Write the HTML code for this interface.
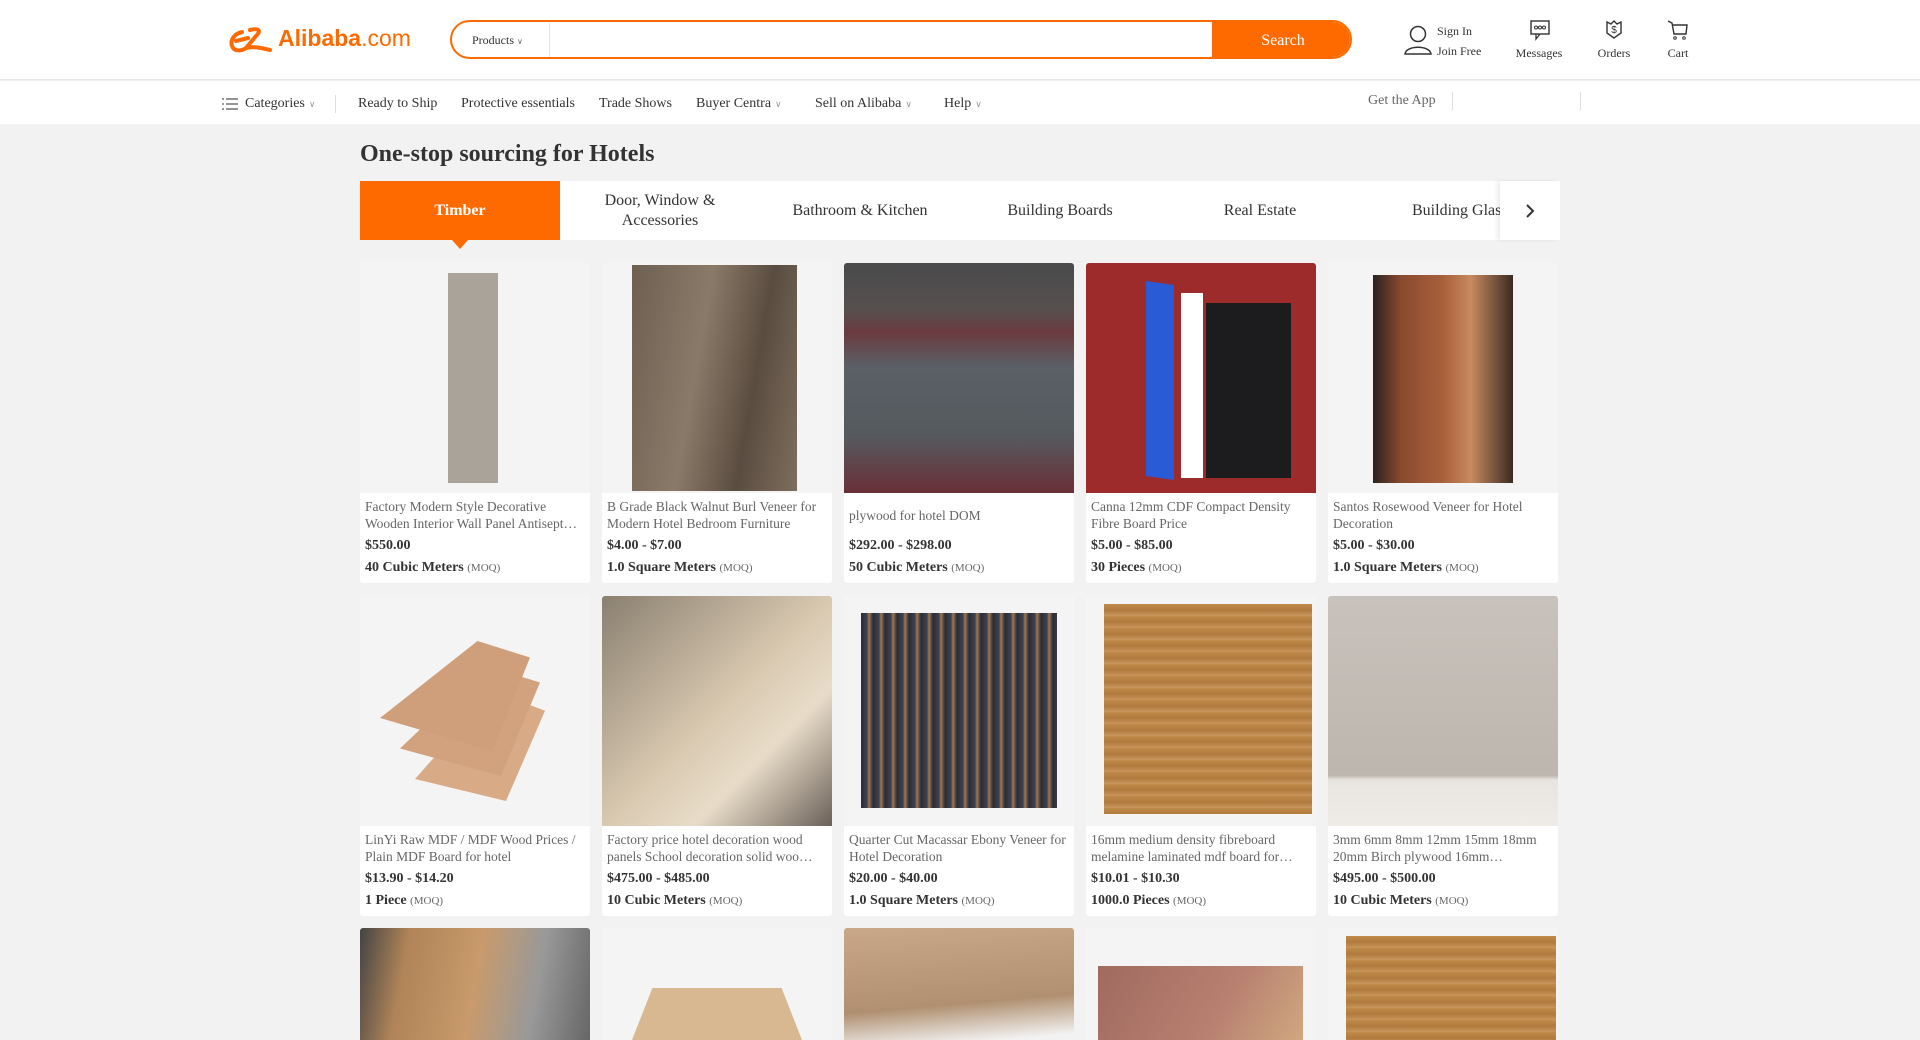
<!DOCTYPE html>
<html><head><meta charset="utf-8"><style>
*{margin:0;padding:0;box-sizing:border-box}
html,body{width:1920px;height:1040px;overflow:hidden}
body{background:#f2f2f2;font-family:"Liberation Serif",serif;color:#333}
#wrap{position:relative;width:1920px;height:1040px;overflow:hidden;background:#f2f2f2}
.a{position:absolute}
#hdr{left:0;top:0;width:1920px;height:80px;background:#fff;border-bottom:1px solid #e5e5e5}
#nav{left:0;top:81px;width:1920px;height:43px;background:#fff}
.nv{position:absolute;top:96px;font-size:14px;color:#333;white-space:nowrap}
.car{font-size:9px;color:#999;margin-left:4px}
.ic{font-size:12px;color:#333;text-align:center;white-space:nowrap}
.tab{position:absolute;top:181px;height:59px;display:flex;align-items:center;justify-content:center;text-align:center;font-size:16px;color:#333;line-height:20px}
.card{position:absolute;width:230px;height:320px;background:#fff;border-radius:3px;overflow:hidden}
.r3{height:112px;border-radius:3px 3px 0 0;background:#f4f4f4}
.img{position:absolute;left:0;top:0;width:230px;height:230px;background:#f4f4f4}
.t{position:absolute;left:5px;top:235px;width:222px;font-size:13.5px;line-height:17px;color:#666;height:34px;overflow:hidden}
.p{position:absolute;left:5px;top:275px;font-size:14px;font-weight:bold;color:#333}
.m{position:absolute;left:5px;top:297px;font-size:14px;font-weight:bold;color:#333}
.m span{font-weight:normal;font-size:11px;color:#666}
</style></head><body><div id="wrap">
<div id="hdr" class="a"></div>
<svg class="a" style="left:228px;top:26px" width="46" height="30" viewBox="0 0 46 30"><path d="M14 6 C6 8 2 14 4 20 C6 26 14 25 18 22 M8 15 L20 12 M22 4 C30 2 34 4 28 10 L18 22 C26 20 34 22 42 24" fill="none" stroke="#ff6a00" stroke-width="4" stroke-linecap="round"/></svg>
<div class="a" style="left:278px;top:25px;font-family:'Liberation Sans',sans-serif;font-size:23px;color:#ff6a00;white-space:nowrap"><b>Alibaba</b>.com</div>
<div class="a" style="left:450px;top:20px;width:902px;height:39px;border:2px solid #ff6a00;border-radius:20px;background:#fff;overflow:hidden">
<div class="a" style="left:0;top:1px;width:98px;height:35px;border-right:1px solid #e5e5e5;font-size:12px;line-height:35px;padding-left:20px;color:#333">Products <span style="font-size:8px;color:#666">&#8744;</span></div>
<div class="a" style="left:760px;top:0;width:142px;height:35px;background:#ff6a00;color:#fff;font-size:16px;line-height:37px;text-align:center">Search</div>
</div>
<svg class="a" style="left:1403px;top:24px" width="30" height="32" viewBox="0 0 30 32"><circle cx="15" cy="10" r="7.5" fill="none" stroke="#333" stroke-width="1.5"/><path d="M2 30 C3 21 27 21 28 30 Z" fill="none" stroke="#333" stroke-width="1.5"/></svg>
<div class="a" style="left:1437px;top:21px;font-size:12px;line-height:20px">Sign In<br>Join Free</div>
<svg class="a" style="left:1529px;top:19px" width="22" height="22" viewBox="0 0 22 22"><rect x="2" y="2" width="18" height="13" fill="none" stroke="#333" stroke-width="1.4"/><path d="M7 15 L7 20 L11 15" fill="none" stroke="#333" stroke-width="1.3"/><circle cx="7" cy="8.5" r="1.5" fill="none" stroke="#333"/><circle cx="11" cy="8.5" r="1.5" fill="none" stroke="#333"/><circle cx="15" cy="8.5" r="1.5" fill="none" stroke="#333"/></svg>
<div class="a ic" style="left:1509px;top:46px;width:60px">Messages</div>
<svg class="a" style="left:1604px;top:19px" width="20" height="22" viewBox="0 0 20 22"><path d="M3 3 L7 5 L10 2 L13 5 L17 3 L17 14 L10 19 L3 14 Z" fill="none" stroke="#333" stroke-width="1.4"/><text x="10" y="14" font-size="10" text-anchor="middle" fill="#333" font-family="Liberation Sans">$</text></svg>
<div class="a ic" style="left:1589px;top:46px;width:50px">Orders</div>
<svg class="a" style="left:1667px;top:19px" width="22" height="22" viewBox="0 0 22 22"><path d="M1 2 L5 4 L7 15 L19 15 L20 6 L6 6" fill="none" stroke="#333" stroke-width="1.4"/><circle cx="8" cy="19" r="1.3" fill="none" stroke="#333"/><circle cx="17" cy="19" r="1.3" fill="none" stroke="#333"/></svg>
<div class="a ic" style="left:1658px;top:46px;width:40px">Cart</div>
<div id="nav" class="a"></div>
<svg class="a" style="left:222px;top:98px" width="16" height="12" viewBox="0 0 16 12"><g stroke="#555" stroke-width="1.2"><path d="M0 1h2M4 1h12M0 6h2M4 6h12M0 11h2M4 11h12"/></g></svg>
<div class="nv" style="left:245px">Categories<span class="car">&#8744;</span></div>
<div class="a" style="left:335px;top:95px;width:1px;height:18px;background:#ddd"></div>
<div class="nv" style="left:358px">Ready to Ship</div>
<div class="nv" style="left:461px">Protective essentials</div>
<div class="nv" style="left:599px">Trade Shows</div>
<div class="nv" style="left:696px">Buyer Centra<span class="car">&#8744;</span></div>
<div class="nv" style="left:815px">Sell on Alibaba<span class="car">&#8744;</span></div>
<div class="nv" style="left:944px">Help<span class="car">&#8744;</span></div>
<div class="nv" style="left:1368px;top:93px;color:#666">Get the App</div>
<div class="a" style="left:1452px;top:92px;width:1px;height:18px;background:#ddd"></div>
<div class="a" style="left:1580px;top:92px;width:1px;height:18px;background:#ddd"></div>
<div class="a" style="left:360px;top:141px;font-size:24px;font-weight:bold;color:#333">One-stop sourcing for Hotels</div>
<div class="a" style="left:360px;top:181px;width:1200px;height:59px;background:#fff"></div>
<div class="tab" style="left:360px;width:200px;background:#ff6a00;color:#fff;font-weight:bold">Timber</div>
<div class="a" style="left:452px;top:240px;width:0;height:0;border-left:8px solid transparent;border-right:8px solid transparent;border-top:9px solid #ff6a00"></div>
<div class="tab" style="left:560px;width:200px">Door, Window &amp;<br>Accessories</div>
<div class="tab" style="left:760px;width:200px">Bathroom &amp; Kitchen</div>
<div class="tab" style="left:960px;width:200px">Building Boards</div>
<div class="tab" style="left:1160px;width:200px">Real Estate</div>
<div class="tab" style="left:1360px;width:141px;justify-content:flex-start;padding-left:52px;overflow:hidden;white-space:nowrap">Building Glass</div>
<div class="a" style="left:1500px;top:181px;width:60px;height:59px;background:#fff;box-shadow:-3px 0 4px rgba(0,0,0,.08)"></div>
<svg class="a" style="left:1524px;top:203px" width="12" height="16" viewBox="0 0 12 16"><path d="M3 2 L9 8 L3 14" fill="none" stroke="#333" stroke-width="2"/></svg>

<div class="card" style="left:360px;top:263px"><div class="img"><div class="a" style="left:88px;top:10px;width:50px;height:210px;background:#aaa39a"></div></div>
<div class="t">Factory Modern Style Decorative Wooden Interior Wall Panel Antisept…</div><div class="p">$550.00</div><div class="m">40 Cubic Meters <span>(MOQ)</span></div></div>
<div class="card" style="left:602px;top:263px"><div class="img"><div class="a" style="left:30px;top:2px;width:165px;height:226px;background:linear-gradient(100deg,#6d5f52,#8a7a68 40%,#5a4c40 70%,#7d6e5e)"></div></div>
<div class="t">B Grade Black Walnut Burl Veneer for Modern Hotel Bedroom Furniture</div><div class="p">$4.00 - $7.00</div><div class="m">1.0 Square Meters <span>(MOQ)</span></div></div>
<div class="card" style="left:844px;top:263px"><div class="img" style="background:linear-gradient(180deg,#4a4a4c 0,#55504e 20%,#6b3a40 30%,#5a6066 45%,#555a5e 75%,#6a2f38 100%)"></div>
<div class="t" style="top:244px">plywood for hotel DOM</div><div class="p">$292.00 - $298.00</div><div class="m">50 Cubic Meters <span>(MOQ)</span></div></div>
<div class="card" style="left:1086px;top:263px"><div class="img" style="background:#9e2b2b"><div class="a" style="left:60px;top:20px;width:28px;height:195px;background:#2a5bd7;transform:skewY(8deg)"></div><div class="a" style="left:95px;top:30px;width:22px;height:185px;background:#fff"></div><div class="a" style="left:120px;top:40px;width:85px;height:175px;background:#1c1c1e"></div></div>
<div class="t">Canna 12mm CDF Compact Density Fibre Board Price</div><div class="p">$5.00 - $85.00</div><div class="m">30 Pieces <span>(MOQ)</span></div></div>
<div class="card" style="left:1328px;top:263px"><div class="img"><div class="a" style="left:45px;top:12px;width:140px;height:208px;background:linear-gradient(90deg,#2a2220,#8a4a2e 20%,#a8603c 50%,#c88a5e 70%,#3a2a22)"></div></div>
<div class="t">Santos Rosewood Veneer for Hotel Decoration</div><div class="p">$5.00 - $30.00</div><div class="m">1.0 Square Meters <span>(MOQ)</span></div></div>

<div class="card" style="left:360px;top:596px"><div class="img">
<div class="a" style="left:55px;top:95px;width:130px;height:110px;background:#d8aa86;clip-path:polygon(60% 0,100% 18%,70% 100%,0 80%)"></div>
<div class="a" style="left:40px;top:70px;width:140px;height:110px;background:#d2a27e;clip-path:polygon(62% 0,100% 15%,72% 100%,0 75%)"></div>
<div class="a" style="left:20px;top:45px;width:150px;height:110px;background:#cf9f7b;clip-path:polygon(65% 0,100% 15%,75% 100%,0 70%)"></div></div>
<div class="t">LinYi Raw MDF / MDF Wood Prices / Plain MDF Board for hotel</div><div class="p">$13.90 - $14.20</div><div class="m">1 Piece <span>(MOQ)</span></div></div>
<div class="card" style="left:602px;top:596px"><div class="img" style="background:linear-gradient(135deg,#8a8070,#d8c8b0 50%,#e8dcc8 70%,#6a6058)"></div>
<div class="t">Factory price hotel decoration wood panels School decoration solid woo…</div><div class="p">$475.00 - $485.00</div><div class="m">10 Cubic Meters <span>(MOQ)</span></div></div>
<div class="card" style="left:844px;top:596px"><div class="img"><div class="a" style="left:17px;top:17px;width:196px;height:195px;background:repeating-linear-gradient(90deg,#2a2c36 0,#3e4250 6px,#a07850 8px,#2a2c36 12px)"></div></div>
<div class="t">Quarter Cut Macassar Ebony Veneer for Hotel Decoration</div><div class="p">$20.00 - $40.00</div><div class="m">1.0 Square Meters <span>(MOQ)</span></div></div>
<div class="card" style="left:1086px;top:596px"><div class="img"><div class="a" style="left:18px;top:8px;width:208px;height:210px;background:repeating-linear-gradient(180deg,#c08a4a 0,#b07a3e 6px,#c8955a 12px)"></div></div>
<div class="t">16mm medium density fibreboard melamine laminated mdf board for…</div><div class="p">$10.01 - $10.30</div><div class="m">1000.0 Pieces <span>(MOQ)</span></div></div>
<div class="card" style="left:1328px;top:596px"><div class="img" style="background:linear-gradient(180deg,#c8c2bc,#bdb6ae 78%,#e8e4e0 80%,#efece8)"></div>
<div class="t">3mm 6mm 8mm 12mm 15mm 18mm 20mm Birch plywood 16mm…</div><div class="p">$495.00 - $500.00</div><div class="m">10 Cubic Meters <span>(MOQ)</span></div></div>

<div class="card r3" style="left:360px;top:928px;background:linear-gradient(100deg,#444 0,#b08458 20%,#c89a6c 50%,#999 75%,#666)"></div>
<div class="card r3" style="left:602px;top:928px"><div class="a" style="left:30px;top:60px;width:170px;height:52px;background:#d8b890;clip-path:polygon(12% 0,88% 0,100% 100%,0 100%)"></div></div>
<div class="card r3" style="left:844px;top:928px;background:linear-gradient(175deg,#c8a888 0,#b09070 65%,#f2f2f2 95%)"></div>
<div class="card r3" style="left:1086px;top:928px"><div class="a" style="left:12px;top:38px;width:205px;height:74px;background:linear-gradient(120deg,#a06a60,#b88070 60%,#d0a880)"></div></div>
<div class="card r3" style="left:1328px;top:928px"><div class="a" style="left:18px;top:8px;width:210px;height:104px;background:repeating-linear-gradient(180deg,#c08a4a 0,#b07a3e 6px,#c8955a 12px)"></div></div>
</div></body></html>
